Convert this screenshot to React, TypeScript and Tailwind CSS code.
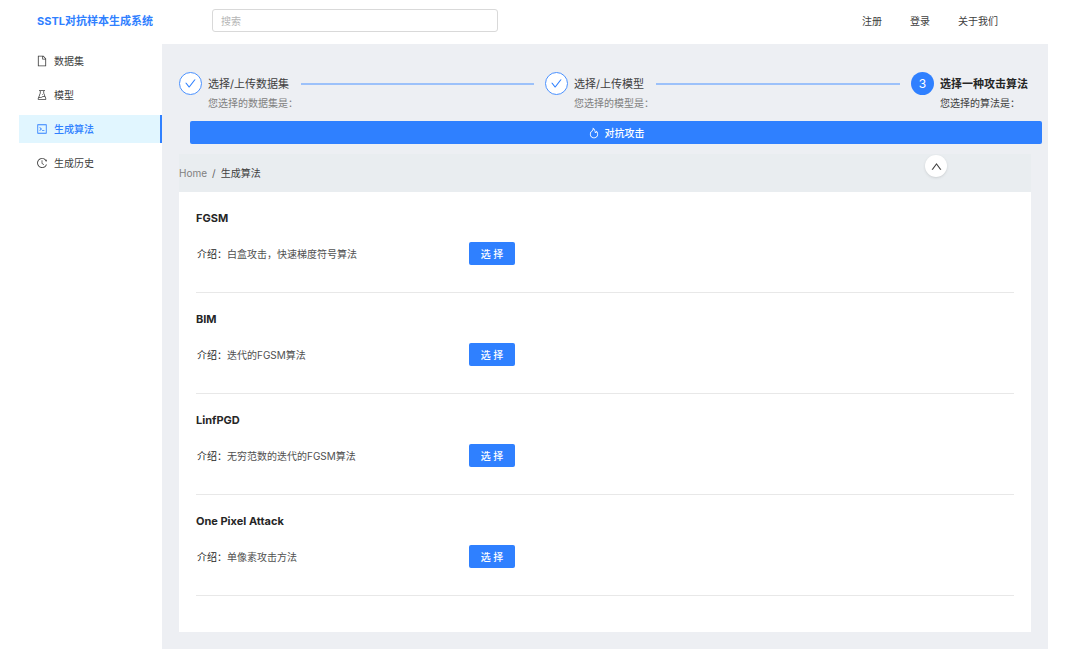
import {
  AiOutlineCheck,
  AiOutlineCode,
  AiOutlineExperiment,
  AiOutlineFile,
  AiOutlineFire,
  AiOutlineHistory,
  AiOutlineUp,
} from "react-icons/ai"

const menu = [
  { label: "数据集", icon: AiOutlineFile },
  { label: "模型", icon: AiOutlineExperiment },
  { label: "生成算法", icon: AiOutlineCode, active: true },
  { label: "生成历史", icon: AiOutlineHistory },
]

const links = ["注册", "登录", "关于我们"]

const algorithms = [
  { name: "FGSM", intro: "白盒攻击，快速梯度符号算法" },
  { name: "BIM", intro: "迭代的FGSM算法" },
  { name: "LinfPGD", intro: "无穷范数的迭代的FGSM算法" },
  { name: "One Pixel Attack", intro: "单像素攻击方法" },
]

function Header() {
  return (
    <header className="flex h-11 items-center pb-[3px]">
      <h1 className="w-[193px] shrink-0 pl-[18px] text-[11px] font-bold text-[#2f80ff]">SSTL对抗样本生成系统</h1>
      <input
        type="text"
        placeholder="搜索"
        aria-label="搜索"
        className="h-[23px] w-[286px] rounded-[3px] border border-[#d9d9d9] px-2 text-[10px] outline-none placeholder:text-[#b5b5b5]"
      />
      <nav className="ml-auto flex gap-7 pr-[50px]">
        {links.map((l) => (
          <a key={l} href="#" className="text-[#404040]">{l}</a>
        ))}
      </nav>
    </header>
  )
}

function Sidebar() {
  return (
    <nav className="flex w-[143px] shrink-0 flex-col gap-1.5 pt-[3px]">
      {menu.map(({ label, icon: Icon, active }) => (
        <a
          key={label}
          href="#"
          className={
            active
              ? "flex h-7 items-center gap-1.5 border-r-2 border-[#2f80ff] bg-[#e1f6ff] pl-[17px] font-medium text-[#2f80ff]"
              : "flex h-7 items-center gap-1.5 pl-[17px] text-[#404040]"
          }
        >
          <Icon size={12} />
          {label}
        </a>
      ))}
    </nav>
  )
}

type StepProps = { title: string; desc: string; num?: number }

function Step({ title, desc, num }: StepProps) {
  return (
    <li className={num ? "flex w-[120px] shrink-0 gap-1.5" : "flex flex-1 gap-1.5 pr-[11px]"}>
      {num ? (
        <span className="flex size-[23px] shrink-0 items-center justify-center rounded-full bg-[#2f80ff] text-xs text-white">{num}</span>
      ) : (
        <span className="flex size-[23px] shrink-0 items-center justify-center rounded-full border border-[#4a91ff] bg-white text-[#2f80ff]">
          <AiOutlineCheck size={13} />
        </span>
      )}
      <div className="flex-1">
        <div className="flex h-[23px] items-center gap-3">
          <span className={num ? "whitespace-nowrap text-[11px] font-bold text-[#262626]" : "whitespace-nowrap text-[11px] text-[#404040]"}>{title}</span>
          {!num && <span className="h-0.5 flex-1 bg-[#9cc1fa]" />}
        </div>
        <p className={num ? "text-[#404040]" : "text-[#808080]"}>{desc}</p>
      </div>
    </li>
  )
}

function AlgorithmItem({ name, intro }: { name: string; intro: string }) {
  return (
    <li className="h-[101px] border-b border-[#e8e8e8] pt-[17px]">
      <h2 className="text-[11px] leading-[18px] font-bold text-[#262626]">{name}</h2>
      <div className="mt-[15px] flex items-center">
        <p className="w-[273px] pl-px text-[#505050]">
          <span className="text-[#262626]">介绍：</span>
          {intro}
        </p>
        <button className="h-[23px] w-[46px] rounded-[2px] bg-[#2f80ff] font-medium text-white">选 择</button>
      </div>
    </li>
  )
}

function App() {
  return (
    <div className="bg-white pr-8 pb-[11px] pl-[19px] font-[Inter,'Noto_Sans_CJK_SC',sans-serif] text-[10px] leading-4">
      <Header />
      <div className="flex">
        <Sidebar />
        <main className="flex-1 bg-[#edeff3] px-[17px] pt-7 pb-[17px]">
          <ol className="flex h-[49px]">
            <Step title="选择/上传数据集" desc="您选择的数据集是：" />
            <Step title="选择/上传模型" desc="您选择的模型是：" />
            <Step title="选择一种攻击算法" desc="您选择的算法是：" num={3} />
          </ol>
          {/* attack */}
          <div className="-mr-[11px] ml-[11px]">
            <button className="flex h-[23px] w-full items-center justify-center gap-[5px] rounded-[2px] bg-[#2f80ff] font-medium text-white">
              <AiOutlineFire size={12} />
              对抗攻击
            </button>
          </div>
          <div className="relative mt-2.5 flex h-[38px] items-center gap-[5px] bg-[#e9edf0]">
            <a href="#" className="text-[#808080]">Home</a>
            <span className="text-[#606060]">/</span>
            <span className="text-[#404040]">生成算法</span>
            {/* back to top */}
            <button aria-label="回到顶部" className="absolute top-px right-[84px] flex size-[22px] items-center justify-center rounded-full bg-white text-[#404040] shadow">
              <AiOutlineUp size={13} />
            </button>
          </div>
          <ul className="bg-white px-[17px] pb-9">
            {algorithms.map((a) => (
              <AlgorithmItem key={a.name} name={a.name} intro={a.intro} />
            ))}
          </ul>
        </main>
      </div>
    </div>
  )
}

export default App
